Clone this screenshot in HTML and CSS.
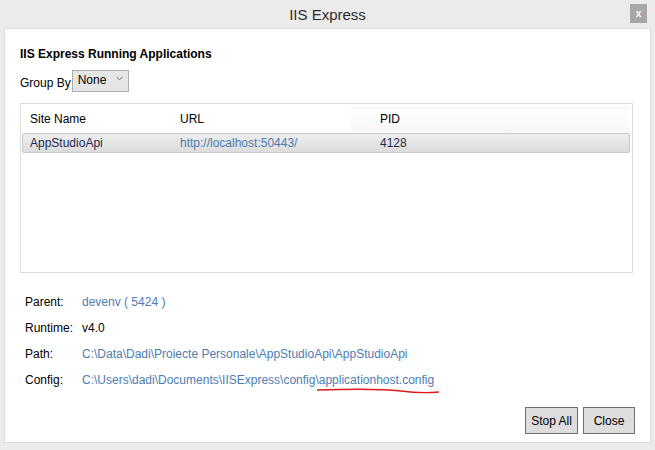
FILE: index.html
```html
<!DOCTYPE html>
<html>
<head>
<meta charset="utf-8">
<link rel="stylesheet" href="styles.css">
</head>
<body>
<div class="window">
  <div class="titlebar">
    <span class="title">IIS Express</span>
    <span class="close-x">x</span>
  </div>
  <div class="panel">
    <h1 class="heading">IIS Express Running Applications</h1>
    <div class="groupby">
      <span>Group By</span>
      <span class="select">None <svg class="chev" width="7" height="5" viewBox="0 0 7 5"><path d="M0.5 0.8 L3.5 3.8 L6.5 0.8" fill="none" stroke="#777" stroke-width="1"/></svg></span>
    </div>
    <div class="listbox">
      <div class="list-header">
        <span class="c1">Site Name</span>
        <span class="c2">URL</span>
        <span class="c3">PID</span>
        <span class="hfill"></span>
      </div>
      <div class="list-row">
        <span class="c1 name">AppStudioApi</span>
        <span class="c2 link">http://localhost:50443/</span>
        <span class="c3 name">4128</span>
      </div>
    </div>
    <div class="details">
      <div class="drow"><span class="dlabel">Parent:</span><span class="link">devenv ( 5424 )</span></div>
      <div class="drow"><span class="dlabel">Runtime:</span><span>v4.0</span></div>
      <div class="drow"><span class="dlabel">Path:</span><span class="link">C:\Data\Dadi\Proiecte Personale\AppStudioApi\AppStudioApi</span></div>
      <div class="drow"><span class="dlabel">Config:</span><span class="link underline-wrap">C:\Users\dadi\Documents\IISExpress\config\<span class="marked">applicationhost.config<svg class="scribble" width="124" height="8" viewBox="0 0 124 8"><path d="M1 3 C30 2 60 1 85 4 C100 6 112 6 123 5" fill="none" stroke="#e0191b" stroke-width="1.4"/></svg></span></span></div>
    </div>
    <div class="buttons">
      <span class="btn btn-stop">Stop All</span>
      <span class="btn btn-close">Close</span>
    </div>
  </div>
</div>
</body>
</html>
```
FILE: styles.css
```css
html, body {
  margin: 0;
  padding: 0;
}
body {
  width: 655px;
  height: 450px;
  background: #ebebeb;
  font-family: "Liberation Sans", Arial, sans-serif;
  font-size: 12px;
  color: #000;
  overflow: hidden;
}
.window {
  display: flex;
  flex-direction: column;
  height: 450px;
}
.titlebar {
  height: 28px;
  position: relative;
  display: flex;
  align-items: center;
  justify-content: center;
}
.title {
  font-size: 15px;
  color: #2b2b2b;
}
.close-x {
  position: absolute;
  right: 8px;
  top: 4px;
  width: 17px;
  height: 19px;
  background: #a8a8a8;
  color: #fff;
  font-size: 10px;
  font-weight: bold;
  display: flex;
  align-items: center;
  justify-content: center;
}
.panel {
  margin: 0 4px 6px 4px;
  background: #fff;
  border: 1px solid #dcdcdc;
  height: 415px;
  box-sizing: border-box;
  padding: 0 0 0 15px;
  display: flex;
  flex-direction: column;
}
.heading {
  font-size: 12px;
  font-weight: bold;
  margin: 18px 0 0 0;
  line-height: 15px;
}
.groupby {
  display: flex;
  align-items: flex-end;
  margin-top: 8px;
  height: 22px;
}
.groupby > span:first-child {
  line-height: 15px;
  padding-bottom: 1px;
}
.select {
  margin-left: 1px;
  width: 57px;
  height: 22px;
  box-sizing: border-box;
  background: #e6e6e6;
  border: 1px solid #acacac;
  display: flex;
  align-items: center;
  padding-left: 5px;
  padding-bottom: 2px;
  font-size: 12px;
}
.chev {
  margin-left: 10px;
  margin-top: -3px;
}
.listbox {
  margin-top: 11px;
  width: 613px;
  height: 170px;
  box-sizing: border-box;
  border: 1px solid #dedede;
  padding: 1px;
  display: flex;
  flex-direction: column;
}
.list-header {
  height: 28px;
  display: flex;
  align-items: center;
  position: relative;
}
.hfill {
  position: absolute;
  left: 329px;
  right: 2px;
  top: 2px;
  bottom: 0;
  background: linear-gradient(#fefefe, #f7f7f8);
  border-top: 1px solid #f2f2f2;
}
.c1 { width: 150px; padding-left: 8px; position: relative; z-index: 1; }
.c2 { width: 200px; position: relative; z-index: 1; }
.c3 { width: 100px; position: relative; z-index: 1; }
.list-row {
  height: 20px;
  box-sizing: border-box;
  margin-right: 1px;
  border: 1px solid #c9c9c9;
  border-radius: 2px;
  background: linear-gradient(#eeeeee, #dcdcdc);
  display: flex;
  align-items: center;
}
.list-row .c1 { padding-left: 7px; }
.name { color: #1f2a4f; }
.link { color: #4d7db1; }
.details {
  margin-top: 22px;
  display: flex;
  flex-direction: column;
  gap: 11px;
  padding-left: 5px;
}
.drow {
  display: flex;
  line-height: 15px;
}
.dlabel {
  width: 57px;
}
.marked {
  position: relative;
}
.scribble {
  position: absolute;
  left: -3px;
  top: 14px;
}
.buttons {
  margin-top: auto;
  margin-bottom: 8px;
  margin-right: 15px;
  display: flex;
  justify-content: flex-end;
  gap: 5px;
}
.btn {
  height: 27px;
  box-sizing: border-box;
  border: 1px solid #707070;
  background: #dddddd;
  display: flex;
  align-items: center;
  justify-content: center;
}
.btn-stop { width: 53px; }
.btn-close { width: 52px; }
```
